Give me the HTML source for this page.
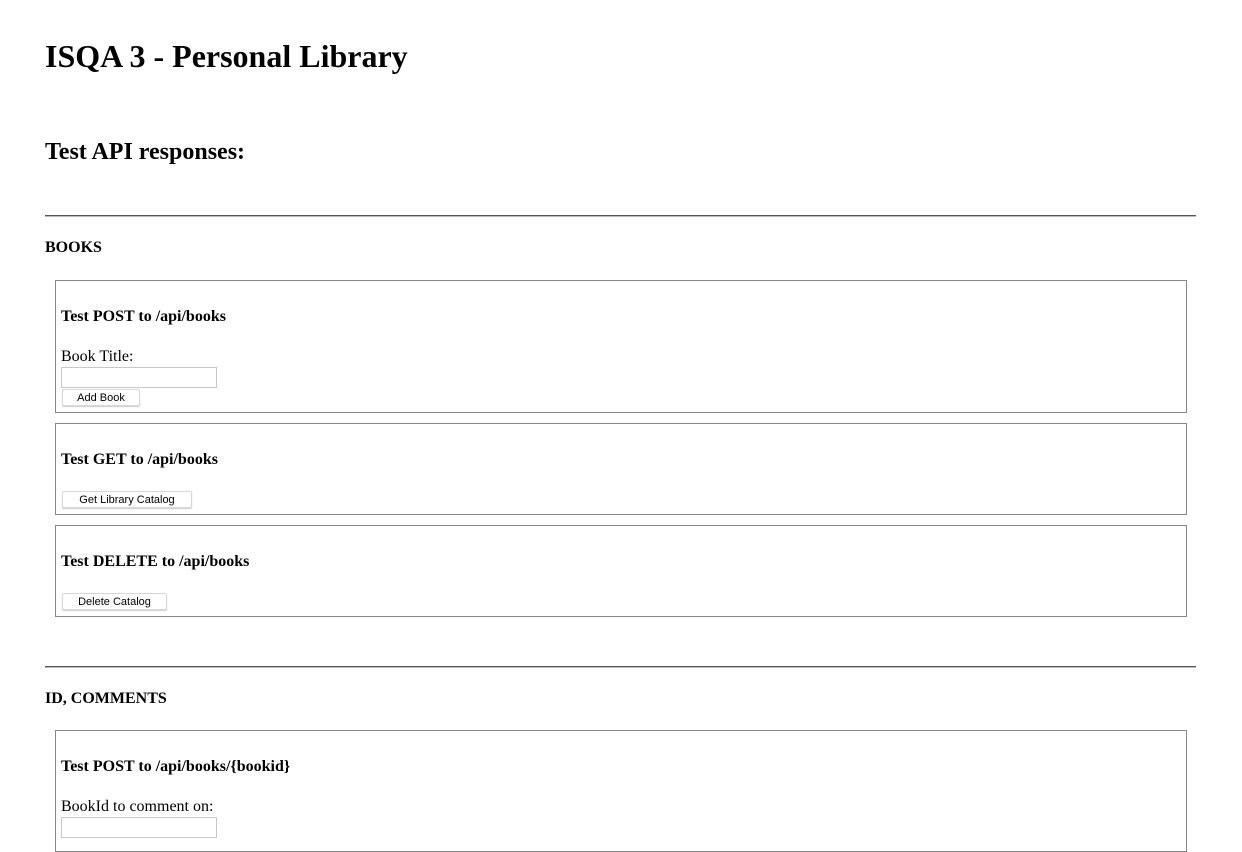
<!DOCTYPE html>
<html><head><style>
html,body{margin:0;background:#fff;font-family:"Liberation Serif",serif;color:#000;width:1242px;height:826px;overflow:hidden;}
.a{position:absolute;line-height:1;white-space:nowrap;}
.b{font-weight:bold;}
.hr{position:absolute;left:45px;width:1151px;height:0;border-top:1px solid #555;border-bottom:1px solid #bbb;}
.box{position:absolute;left:55px;width:1130px;border:1px solid #888;}
.in{position:absolute;left:61px;width:154px;height:19px;border:1px solid #c8c8c8;background:#fff;}
.btn{position:absolute;left:62px;height:15px;border:1px solid #d8d8d8;border-radius:2px;background:#fff;font-family:"Liberation Sans",sans-serif;font-size:11px;line-height:16px;text-align:center;box-shadow:0 1px 1px #ccc;}
</style></head><body>
<div class="a b" style="left:45px;top:40px;font-size:32px;">ISQA 3 - Personal Library</div>
<div class="a b" style="left:45px;top:140px;font-size:24px;">Test API responses:</div>
<div class="hr" style="top:215px;"></div>
<div class="a b" style="left:45px;top:240px;font-size:16px;">BOOKS</div>

<div class="box" style="top:280px;height:131px;"></div>
<div class="a b" style="left:61px;top:309px;font-size:16px;">Test POST to /api/books</div>
<div class="a" style="left:61px;top:349px;font-size:16px;">Book Title:</div>
<div class="in" style="top:367px;"></div>
<div class="btn" style="top:389px;width:76px;">Add Book</div>

<div class="box" style="top:423px;height:90px;"></div>
<div class="a b" style="left:61px;top:452px;font-size:16px;">Test GET to /api/books</div>
<div class="btn" style="top:491px;width:128px;">Get Library Catalog</div>

<div class="box" style="top:525px;height:90px;"></div>
<div class="a b" style="left:61px;top:554px;font-size:16px;">Test DELETE to /api/books</div>
<div class="btn" style="top:593px;width:103px;">Delete Catalog</div>

<div class="hr" style="top:666px;"></div>
<div class="a b" style="left:45px;top:691px;font-size:16px;">ID, COMMENTS</div>

<div class="box" style="top:730px;height:120px;"></div>
<div class="a b" style="left:61px;top:759px;font-size:16px;">Test POST to /api/books/{bookid}</div>
<div class="a" style="left:61px;top:799px;font-size:16px;">BookId to comment on:</div>
<div class="in" style="top:817px;"></div>
</body></html>
